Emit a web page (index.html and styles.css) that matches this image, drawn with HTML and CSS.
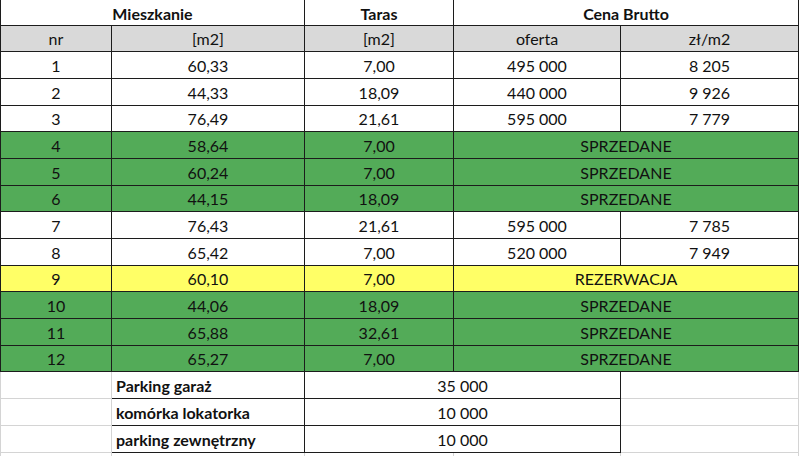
FILE: index.html
```html
<!DOCTYPE html>
<html lang="pl">
<head>
<meta charset="utf-8">
<title>Cennik mieszkań</title>
<link rel="stylesheet" href="styles.css">
</head>
<body>
<table class="sheet">
  <colgroup>
    <col class="c-a"><col class="c-b"><col class="c-c"><col class="c-d"><col class="c-e">
  </colgroup>
  <tr class="top">
    <th colspan="2">Mieszkanie</th>
    <th>Taras</th>
    <th colspan="2">Cena Brutto</th>
  </tr>
  <tr class="sub">
    <td>nr</td><td>[m2]</td><td>[m2]</td><td>oferta</td><td>zł/m2</td>
  </tr>
  <tr><td>1</td><td>60,33</td><td>7,00</td><td>495 000</td><td>8 205</td></tr>
  <tr><td>2</td><td>44,33</td><td>18,09</td><td>440 000</td><td>9 926</td></tr>
  <tr><td>3</td><td>76,49</td><td>21,61</td><td>595 000</td><td>7 779</td></tr>
  <tr class="sold"><td>4</td><td>58,64</td><td>7,00</td><td colspan="2">SPRZEDANE</td></tr>
  <tr class="sold"><td>5</td><td>60,24</td><td>7,00</td><td colspan="2">SPRZEDANE</td></tr>
  <tr class="sold"><td>6</td><td>44,15</td><td>18,09</td><td colspan="2">SPRZEDANE</td></tr>
  <tr><td>7</td><td>76,43</td><td>21,61</td><td>595 000</td><td>7 785</td></tr>
  <tr><td>8</td><td>65,42</td><td>7,00</td><td>520 000</td><td>7 949</td></tr>
  <tr class="reserved"><td>9</td><td>60,10</td><td>7,00</td><td colspan="2">REZERWACJA</td></tr>
  <tr class="sold"><td>10</td><td>44,06</td><td>18,09</td><td colspan="2">SPRZEDANE</td></tr>
  <tr class="sold"><td>11</td><td>65,88</td><td>32,61</td><td colspan="2">SPRZEDANE</td></tr>
  <tr class="sold"><td>12</td><td>65,27</td><td>7,00</td><td colspan="2">SPRZEDANE</td></tr>
  <tr class="extra"><td class="grid"></td><td class="label">Parking garaż</td><td colspan="2">35 000</td><td class="grid"></td></tr>
  <tr class="extra"><td class="grid"></td><td class="label">komórka lokatorka</td><td colspan="2">10 000</td><td class="grid"></td></tr>
  <tr class="extra"><td class="grid"></td><td class="label">parking zewnętrzny</td><td colspan="2">10 000</td><td class="grid"></td></tr>
  <tr class="blank"><td class="grid"></td><td class="grid"></td><td class="grid"></td><td class="grid"></td><td class="grid"></td></tr>
</table>
</body>
</html>
```

FILE: styles.css
```css
html, body {
  margin: 0;
  padding: 0;
  background: #ffffff;
  overflow: hidden;
}

.sheet {
  border-collapse: collapse;
  table-layout: fixed;
  width: 798px;
  font-family: Lato, "Open Sans", sans-serif;
  font-size: 16px;
  color: #111111;
}

.c-a { width: 111px; }
.c-b { width: 193px; }
.c-c { width: 149px; }
.c-d { width: 167px; }
.c-e { width: 178px; }

.sheet th,
.sheet td {
  border: 1px solid #1c1c1c;
  padding: 0 4px 2px;
  text-align: center;
  vertical-align: bottom;
  line-height: 20px;
  white-space: nowrap;
  overflow: hidden;
}

.sheet tr { height: 26.69px; }

.sheet tr.top { height: 25px; }

.sheet tr.top th {
  font-weight: 700;
  border-top: none;
  padding-bottom: 1px;
}

.sheet tr.sub td { background: #d9d9d9; }

.sheet tr.sold td { background: #53ab58; }

.sheet tr.reserved td { background: #ffff66; }

.sheet tr.extra td.label {
  text-align: left;
  font-weight: 700;
}

.sheet td.grid {
  border-color: #d4d4d4;
  background: #ffffff;
}

.sheet tr.blank { height: 6px; }
```
